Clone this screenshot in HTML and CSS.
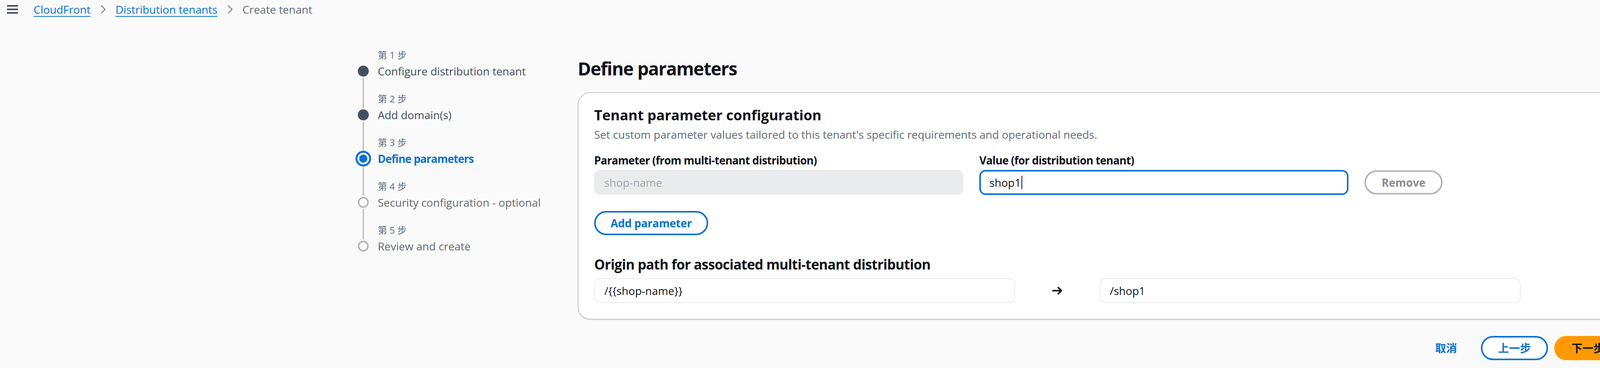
FILE: index.html
```html
<!DOCTYPE html>
<html lang="en">
<head>
<meta charset="utf-8">
<title>Create tenant</title>
<link rel="stylesheet" href="styles.css">
</head>
<body>
<header class="topbar">
  <span class="menu-icon">
    <svg width="28" height="24" viewBox="0 0 28 24"><rect x="0" y="1" width="28" height="4" fill="#414d5c"/><rect x="0" y="10" width="28" height="4" fill="#414d5c"/><rect x="0" y="19" width="28" height="4" fill="#414d5c"/></svg>
  </span>
  <nav class="breadcrumbs">
    <a class="crumb-link" href="#">CloudFront</a>
    <span class="crumb-sep"><svg width="14" height="24" viewBox="0 0 14 24"><path d="M2 2 L12 12 L2 22" fill="none" stroke="#8c8c94" stroke-width="3"/></svg></span>
    <a class="crumb-link" href="#">Distribution tenants</a>
    <span class="crumb-sep"><svg width="14" height="24" viewBox="0 0 14 24"><path d="M2 2 L12 12 L2 22" fill="none" stroke="#8c8c94" stroke-width="3"/></svg></span>
    <span class="crumb-current">Create tenant</span>
  </nav>
</header>

<div class="layout">
  <nav class="wizard-nav">
    <ol class="steps">
      <li class="step done">
        <span class="rail-top"></span>
        <span class="step-num">第 1 步</span>
        <span class="rail"><span class="seg"></span><span class="dot"><svg width="28" height="28" viewBox="0 0 28 28"><circle cx="14" cy="14" r="14" fill="#414d5c"/><circle cx="14" cy="14" r="10" fill="none" stroke="#6b7684" stroke-width="1" stroke-dasharray="2 2"/></svg></span><span class="seg"></span></span>
        <span class="step-title">Configure distribution tenant</span>
      </li>
      <li class="step done">
        <span class="rail-top"></span>
        <span class="step-num">第 2 步</span>
        <span class="rail"><span class="seg"></span><span class="dot"><svg width="28" height="28" viewBox="0 0 28 28"><circle cx="14" cy="14" r="14" fill="#414d5c"/><circle cx="14" cy="14" r="10" fill="none" stroke="#6b7684" stroke-width="1" stroke-dasharray="2 2"/></svg></span><span class="seg"></span></span>
        <span class="step-title">Add domain(s)</span>
      </li>
      <li class="step current">
        <span class="rail-top"></span>
        <span class="step-num">第 3 步</span>
        <span class="rail"><span class="seg"></span><span class="dot dot-current"><svg width="40" height="40" viewBox="0 0 40 40"><circle cx="20" cy="20" r="17.5" fill="#fff" stroke="#0972d3" stroke-width="5"/><circle cx="20" cy="20" r="10.5" fill="#0972d3"/></svg></span><span class="seg"></span></span>
        <span class="step-title">Define parameters</span>
      </li>
      <li class="step todo">
        <span class="rail-top"></span>
        <span class="step-num">第 4 步</span>
        <span class="rail"><span class="seg"></span><span class="dot"><svg width="28" height="28" viewBox="0 0 28 28"><circle cx="14" cy="14" r="12" fill="#fff" stroke="#b4b4bb" stroke-width="4"/></svg></span><span class="seg"></span></span>
        <span class="step-title">Security configuration - optional</span>
      </li>
      <li class="step todo">
        <span class="rail-top"></span>
        <span class="step-num">第 5 步</span>
        <span class="rail"><span class="seg"></span><span class="dot"><svg width="28" height="28" viewBox="0 0 28 28"><circle cx="14" cy="14" r="12" fill="#fff" stroke="#b4b4bb" stroke-width="4"/></svg></span><span class="seg"></span></span>
        <span class="step-title">Review and create</span>
      </li>
    </ol>
  </nav>

  <main class="content">
    <h1 class="page-title">Define parameters</h1>

    <section class="panel">
      <h2 class="panel-title">Tenant parameter configuration</h2>
      <p class="panel-desc">Set custom parameter values tailored to this tenant's specific requirements and operational needs.</p>

      <div class="attr-editor">
        <span class="field-label">Parameter (from multi-tenant distribution)</span>
        <span class="field-label">Value (for distribution tenant)</span>
        <span class="cell-empty"></span>
        <div class="input input-disabled">shop-name</div>
        <div class="input input-focused">shop1<span class="caret"></span></div>
        <button class="btn btn-disabled">Remove</button>
      </div>

      <button class="btn btn-normal add-btn">Add parameter</button>

      <h3 class="origin-title">Origin path for associated multi-tenant distribution</h3>
      <div class="origin-row">
        <div class="input input-readonly">/{{shop-name}}</div>
        <span class="arrow"><svg width="28" height="24" viewBox="0 0 28 24"><path d="M1 12 H24 M15 3 L24 12 L15 21" fill="none" stroke="#0f141a" stroke-width="4"/></svg></span>
        <div class="input input-readonly">/shop1</div>
      </div>
    </section>

    <div class="actions">
      <button class="btn-link">取消</button>
      <button class="btn btn-normal">上一步</button>
      <button class="btn btn-primary">下一步</button>
    </div>
  </main>
</div>
</body>
</html>
```

FILE: styles.css
```css
* {
  box-sizing: border-box;
}

html, body {
  margin: 0;
  padding: 0;
}

body {
  width: 4164px;
  height: 942px;
  overflow: hidden;
  background: #fafafa;
  color: #0f141a;
  font-family: "Open Sans", "Noto Sans CJK SC", sans-serif;
  font-size: 28px;
  line-height: 40px;
}

/* ---------- top bar / breadcrumbs ---------- */
.topbar {
  height: 48px;
  display: flex;
  align-items: center;
  padding-left: 18px;
  gap: 40px;
}

.menu-icon {
  display: flex;
}

.breadcrumbs {
  display: flex;
  align-items: center;
  gap: 25px;
}

.crumb-link {
  color: #0972d3;
  text-decoration: underline;
  text-decoration-thickness: 2px;
  text-underline-offset: 6px;
}

.crumb-sep {
  display: flex;
}

.crumb-current {
  color: #5f6b7a;
}

/* ---------- layout ---------- */
.layout {
  display: flex;
  padding: 77px 13px 0 910px;
}

.wizard-nav {
  width: 569px;
  flex: none;
}

.content {
  flex: 1;
  min-width: 0;
}

/* ---------- wizard steps ---------- */
.steps {
  list-style: none;
  margin: 0;
  padding: 0;
}

.step {
  display: grid;
  grid-template-columns: 40px 1fr;
  column-gap: 17px;
}

.rail-top {
  grid-column: 1;
  grid-row: 1;
  justify-self: center;
  width: 4px;
  background: #c6c6cd;
}

.step-num {
  grid-column: 2;
  grid-row: 1;
  font-size: 24px;
  line-height: 32px;
  color: #5f6b7a;
  padding-top: 35px;
  padding-bottom: 5px;
}

.step:first-child .step-num {
  padding-top: 0;
}

.step:first-child .rail-top,
.step:first-child .rail .seg:first-child,
.step:last-child .rail .seg:last-child {
  visibility: hidden;
}

.rail {
  grid-column: 1;
  grid-row: 2;
  display: flex;
  flex-direction: column;
  align-items: center;
}

.seg {
  flex: 1;
  width: 4px;
  background: #c6c6cd;
}

.dot {
  display: flex;
  margin: 3px 0;
}

.dot-current {
  margin: 0;
}

.step-title {
  grid-column: 2;
  grid-row: 2;
  font-size: 28px;
  line-height: 40px;
  white-space: nowrap;
}

.step.done .step-title {
  color: #414d5c;
}

.step.current .step-title {
  color: #0972d3;
  font-weight: 700;
  letter-spacing: -1px;
}

.step.todo .step-title {
  color: #656871;
}

/* ---------- main content ---------- */
.page-title {
  margin: 20px 0 31px;
  font-size: 46px;
  line-height: 60px;
  font-weight: 700;
  letter-spacing: -1.4px;
  color: #0f141a;
}

.panel {
  background: #fff;
  border: 2px solid #c6c6cd;
  border-radius: 32px;
  padding: 35px 40px 40px;
  box-shadow: 0 2px 2px rgba(0, 7, 22, 0.08);
}

.panel-title {
  margin: 0;
  font-size: 36px;
  line-height: 44px;
  font-weight: 700;
  color: #0f141a;
}

.panel-desc {
  margin: 7px 0 0;
  color: #5f6b7a;
}

.attr-editor {
  margin-top: 26px;
  display: grid;
  grid-template-columns: 945px 945px auto;
  column-gap: 41px;
  row-gap: 5px;
  justify-content: start;
  align-items: center;
}

.field-label {
  font-weight: 700;
  letter-spacing: -0.8px;
  color: #0f141a;
}

.input {
  height: 64px;
  border: 2px solid #e9ebed;
  border-radius: 16px;
  padding: 10px 24px;
  background: #fff;
  color: #0f141a;
  white-space: nowrap;
  display: flex;
  align-items: center;
}

.input-disabled {
  background: #e9ebed;
  color: #a4a4ad;
}

.input-focused {
  border: 4px solid #0972d3;
  padding: 8px 22px;
}

.caret {
  width: 2px;
  height: 34px;
  background: #0f141a;
  margin-left: 1px;
}

.btn {
  font-family: inherit;
  font-size: 28px;
  line-height: 40px;
  font-weight: 700;
  height: 62px;
  padding: 7px 38px;
  border-radius: 40px;
  border: 4px solid #0972d3;
  background: #fff;
  color: #0972d3;
  cursor: pointer;
}

.btn-disabled {
  border-color: #b4b4bb;
  color: #8c8c94;
  background: #fff;
  padding: 7px 40px;
}

.add-btn {
  margin-top: 41px;
  display: block;
  letter-spacing: -0.3px;
}

.origin-title {
  margin: 53px 0 0;
  font-size: 35px;
  line-height: 44px;
  font-weight: 700;
  letter-spacing: -0.8px;
  color: #0f141a;
}

.origin-row {
  margin-top: 13px;
  display: grid;
  grid-template-columns: 5fr 1fr 5fr 1fr;
  align-items: center;
}

.arrow {
  display: flex;
  justify-content: center;
}

/* ---------- footer actions ---------- */
.actions {
  margin-top: 42px;
  display: flex;
  justify-content: flex-end;
  align-items: center;
  gap: 16px;
}

.btn-link {
  font-family: inherit;
  font-size: 28px;
  line-height: 40px;
  font-weight: 700;
  color: #0972d3;
  background: transparent;
  border: none;
  padding: 11px 40px;
  margin-right: 5px;
}

.actions .btn-normal {
  padding: 7px 40px;
}

.btn-primary {
  background: #ff9900;
  border-color: #ff9900;
  color: #0f141a;
  padding: 7px 40px;
}
```
